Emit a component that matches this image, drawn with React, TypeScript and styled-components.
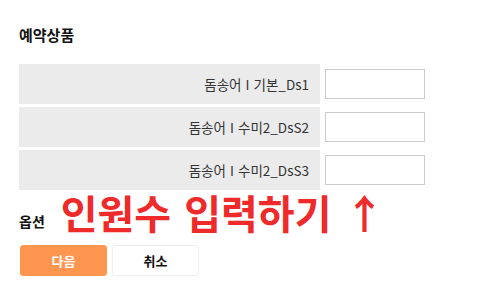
import React from 'react';
import styled, { createGlobalStyle } from 'styled-components';

const GlobalStyle = createGlobalStyle`
  body {
    margin: 0;
    background: #ffffff;
    font-family: "Noto Sans CJK KR", "Noto Sans", sans-serif;
    color: #333333;
  }
`;

const products = ['돔송어 I 기본_Ds1', '돔송어 I 수미2_DsS2', '돔송어 I 수미2_DsS3'];

const App = () => (
  <Page>
    <GlobalStyle />
    <SectionTitle>예약상품</SectionTitle>

    <ProductTable>
      {products.map((name) => (
        <ProductRow key={name}>
          <ProductLabel>{name}</ProductLabel>
          <CountInput type="text" />
        </ProductRow>
      ))}
    </ProductTable>

    <OptionLine>
      <OptionTitle>옵션</OptionTitle>
      <Notice>인원수 입력하기 ↑</Notice>
    </OptionLine>

    <Actions>
      <ActionButton primary>다음</ActionButton>
      <ActionButton>취소</ActionButton>
    </Actions>
  </Page>
);

const Page = styled.div`
  padding: 24px 0 0 19px;
  width: 478px;
  height: 288px;
  box-sizing: border-box;
`;

const SectionTitle = styled.h2`
  margin: 0 0 18px;
  font-size: 15px;
  font-weight: 700;
  color: #111111;
  line-height: 22px;
`;

const ProductTable = styled.div`
  display: flex;
  flex-direction: column;
  gap: 3px;
`;

const ProductRow = styled.div`
  display: flex;
  align-items: center;
  gap: 5px;
`;

const ProductLabel = styled.div`
  width: 301px;
  height: 40px;
  background: #ebebeb;
  display: flex;
  align-items: center;
  justify-content: flex-end;
  padding-right: 11px;
  box-sizing: border-box;
  font-size: 13.5px;
  word-spacing: 1px;
  color: #333333;
`;

const CountInput = styled.input`
  width: 100px;
  height: 30px;
  box-sizing: border-box;
  border: 1px solid #cccccc;
  margin: 0;
  padding: 0 6px;
  background: #ffffff;
  outline: none;
`;

const OptionLine = styled.div`
  display: flex;
  align-items: baseline;
  gap: 16px;
  height: 44px;
`;

const OptionTitle = styled.span`
  font-size: 14px;
  font-weight: 700;
  color: #111111;
  position: relative;
  top: -2px;
`;

const Notice = styled.span`
  font-size: 40px;
  font-weight: 700;
  color: #ee2a2a;
  line-height: 44px;
  word-spacing: 4px;
`;

const Actions = styled.div`
  display: flex;
  gap: 5px;
  margin-top: 11px;
  padding-left: 1px;
`;

const ActionButton = styled.button<{ primary?: boolean }>`
  width: 87px;
  height: 31px;
  border-radius: 3px;
  border: 1px solid ${({ primary }) => (primary ? '#ff9650' : '#eeeeee')};
  background: ${({ primary }) => (primary ? '#ff9650' : '#ffffff')};
  color: ${({ primary }) => (primary ? '#ffffff' : '#111111')};
  font-family: "Noto Sans CJK KR", "Noto Sans", sans-serif;
  font-size: 13px;
  font-weight: 700;
  padding: 0;
  cursor: pointer;
`;

export default App;
